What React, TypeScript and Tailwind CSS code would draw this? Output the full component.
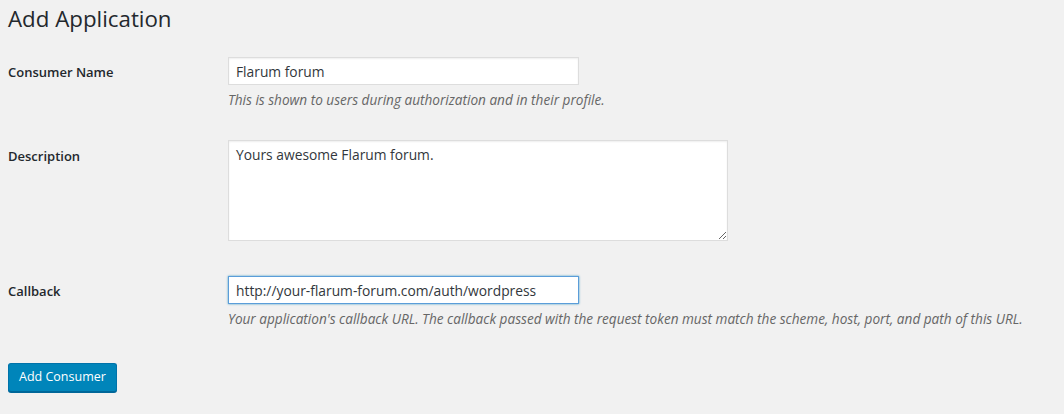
import React from "react";

const labelCls = "w-[210px] pr-[10px] pt-[20px] pb-[20px] text-[13px] font-semibold leading-[1.4] shrink-0";
const hintCls = "mt-[5px] text-[13.6px] italic text-[#666] leading-[1.5]";

const App = () => {
  return (
    <div className="min-h-[414px] bg-[#f1f1f1] text-[#23282d] pl-2 pr-2" style={{ fontFamily: '"Open Sans", "Noto Sans", sans-serif' }}>
      <h1 className="text-[22.3px] font-normal leading-[29px] pt-[4px] m-0">Add Application</h1>

      <div className="mt-[9px]">
        {/* Consumer Name */}
        <div className="flex">
          <div className={labelCls + " !pt-[21px]"}>Consumer Name</div>
          <div className="px-[10px] py-[15px]">
            <input
              type="text"
              defaultValue="Flarum forum"
              className="block w-[351px] h-[28px] px-[7px] text-[13.8px] bg-white border border-[#ddd] shadow-[inset_0_1px_2px_rgba(0,0,0,0.07)] outline-none text-[#32373c]"
            />
            <p className={hintCls}>This is shown to users during authorization and in their profile.</p>
          </div>
        </div>

        {/* Description */}
        <div className="flex">
          <div className={labelCls + " !pt-[22px]"}>Description</div>
          <div className="px-[10px] pt-[15px] pb-[20px]">
            <textarea
              defaultValue="Yours awesome Flarum forum."
              className="block w-[500px] h-[101px] px-[7px] py-[4px] text-[13.8px] leading-[1.4] bg-white border border-[#ddd] shadow-[inset_0_1px_2px_rgba(0,0,0,0.07)] outline-none text-[#32373c]"
            />
          </div>
        </div>

        {/* Callback */}
        <div className="flex">
          <div className={labelCls + " !pt-[21px]"}>Callback</div>
          <div className="px-[10px] py-[15px]">
            <input
              type="text"
              defaultValue="http://your-flarum-forum.com/auth/wordpress"
              className="block w-[351px] h-[28px] px-[7px] text-[13.8px] bg-white border border-[#5b9dd9] shadow-[0_0_2px_rgba(30,140,190,0.8)] outline-none text-[#32373c]"
            />
            <p className={hintCls + " whitespace-nowrap"}>
              Your application's callback URL. The callback passed with the request token must match the scheme, host, port, and path of this URL.
            </p>
          </div>
        </div>
      </div>

      <div className="pt-[18px]">
        <button className="h-[29px] px-[10px] text-[12.5px] leading-[26px] text-white bg-[#0085ba] border border-[#0073aa] border-b-[#006799] rounded-[3px] shadow-[0_1px_0_#006799]">
          Add Consumer
        </button>
      </div>
    </div>
  );
};

export default App;
